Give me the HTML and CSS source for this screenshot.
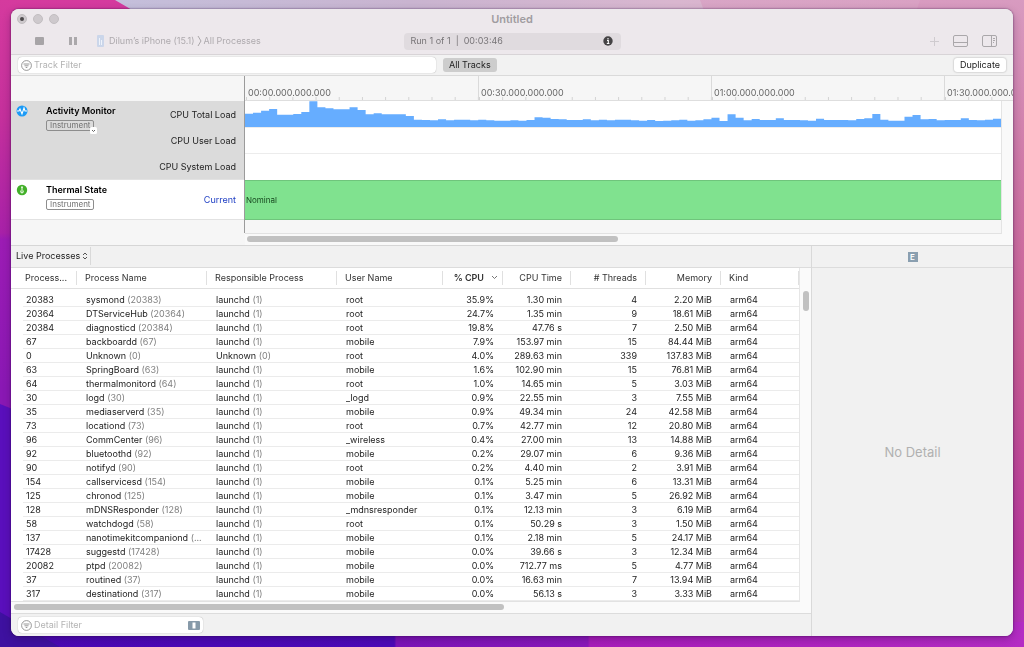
FILE: index.html
```html
<!DOCTYPE html>
<html lang="en">
<head>
<meta charset="utf-8">
<title>Untitled</title>
<meta name="viewport" content="width=device-width, initial-scale=1">
<link rel="stylesheet" href="styles.css">
</head>
<body>
<svg class="wallpaper" viewBox="0 0 1024 647" preserveAspectRatio="none" aria-hidden="true">
  <defs>
    <linearGradient id="wl" x1="0" y1="0" x2="0" y2="1"><stop offset="0" stop-color="#d53a9e"/><stop offset=".18" stop-color="#c5309c"/><stop offset=".36" stop-color="#a821a8"/><stop offset=".37" stop-color="#9c1cb4"/><stop offset=".6" stop-color="#8a18b4"/></linearGradient>
    <linearGradient id="wt" x1="0" y1="0" x2="1" y2="0"><stop offset="0" stop-color="#c2c3df"/><stop offset=".4" stop-color="#c9b4d0"/><stop offset=".66" stop-color="#d9b6cf"/><stop offset="1" stop-color="#dca6c6"/></linearGradient>
    <linearGradient id="wr" x1="0" y1="0" x2="0" y2="1"><stop offset="0" stop-color="#d89bc0"/><stop offset=".25" stop-color="#cf7aa8"/><stop offset=".55" stop-color="#c75c94"/><stop offset=".85" stop-color="#b83a9c"/><stop offset="1" stop-color="#b02fc0"/></linearGradient>
    <linearGradient id="wb" x1="0" y1="0" x2="1" y2="0"><stop offset="0" stop-color="#4a08b4"/><stop offset=".385" stop-color="#4c0ab8"/><stop offset=".387" stop-color="#7c14b8"/><stop offset=".574" stop-color="#8a18ba"/><stop offset=".576" stop-color="#a81cba"/><stop offset="1" stop-color="#b42cc4"/></linearGradient>
  </defs>
  <rect width="1024" height="647" fill="url(#wt)"/>
  <path d="M0 0H115L180 38V647H0z" fill="url(#wl)"/>
  <path d="M700 0H1024V647H940z" fill="url(#wr)" opacity=".6"/>
  <path d="M920 0H1024V647H900V60z" fill="url(#wr)"/>
  <path d="M0 404L20 412V647H0z" fill="#5a0fbc"/>
  <path d="M0 622H1024V647H0z" fill="url(#wb)"/>
  <path d="M0 612L60 647H0z" fill="#3e11a0"/>
</svg>
<main class="window">
  <header class="titlebar">
    <div class="title-row">
      <div class="lights"><button class="light edited" aria-label="Close"></button><button class="light" aria-label="Minimize"></button><button class="light" aria-label="Zoom"></button></div>
      <h1>Untitled</h1>
    </div>
    <div class="toolbar">
      <div class="tools">
        <button class="icon-button" aria-label="Stop"><svg width="10" height="10"><rect x="1" y="1" width="9" height="8" rx="1" fill="#a7a4a7"/></svg></button>
        <button class="icon-button pause" aria-label="Pause"><svg width="8" height="10"><path d="M0 1h3v8H0zM5 1h3v8H5z" fill="#aba8ab"/></svg></button>
        <button class="target">
          <svg width="7" height="12"><rect x="0" y="0" width="7" height="12" rx="1" fill="#cbd6ea"/><path d="M2.500 3v7M4.500 5v5" stroke="#eef3fb"/></svg>
          <span>Dilum’s iPhone (15.1)</span>
          <svg class="crumb" width="5" height="12"><path d="M1 1l3 5-3 5" fill="none" stroke="#aaa7aa"/></svg>
          <span>All Processes</span>
        </button>
      </div>
      <div class="run"><span>Run 1 of 1&nbsp; |&nbsp; 00:03:46</span>
        <button class="icon-button" aria-label="Information"><svg width="10" height="10"><circle cx="5" cy="5" r="4.700" fill="#454345"/><path d="M5 2v1.500M4 4.500h1.300V7.500M3.800 7.500h2.600" stroke="#fff" stroke-width="1.100" fill="none"/></svg></button>
      </div>
      <div class="views">
        <button class="icon-button" aria-label="Add"><svg width="9" height="9"><path d="M0 4.500h9M4.500 0v9" stroke="#cfcbcf"/></svg></button>
        <button class="icon-button" aria-label="Show detail area"><svg width="15" height="12" fill="none" stroke="#aaa7aa"><rect x=".5" y=".5" width="14" height="11" rx="1.500"/><path d="M1 7.500h13"/></svg></button>
        <button class="icon-button" aria-label="Show inspector"><svg width="15" height="12" fill="none" stroke="#aaa7aa"><rect x=".5" y=".5" width="14" height="11" rx="1.500"/><path d="M9.500 1v10M11 3.500h2M11 5.500h2M11 7.500h1"/></svg></button>
      </div>
    </div>
  </header>

  <div class="filter-bar">
    <label class="search">
      <svg width="11" height="11" fill="none" stroke="#7d7d7d"><circle cx="5.500" cy="5.500" r="4.900" stroke-width=".8"/><path d="M2.500 4h6M3.500 5.800h4M4.700 7.500h1.600" stroke-width=".8"/></svg>
      <input type="text" placeholder="Track Filter" aria-label="Track Filter">
    </label>
    <button class="scope">All Tracks</button>
    <button class="duplicate">Duplicate</button>
  </div>

  <section class="timeline">
    <div class="names">
      <div class="ruler-gap"></div>
      <div class="track-name selected">
        <svg class="badge" width="12" height="12"><circle cx="6" cy="6" r="5.500" fill="#1c9bf6"/><path d="M1 6h2l1-2 2 5 2-6 1 3h2" fill="none" stroke="#fff" stroke-width="1.100"/></svg>
        <div class="track-info"><h2>Activity Monitor</h2>
          <button class="tag">Instrument<svg class="drop" width="7" height="7"><rect width="7" height="7" rx="1.500" fill="#fff"/><path d="M2 3l1.500 1.500L5 3" fill="none" stroke="#555" stroke-width=".9"/></svg></button>
        </div>
        <ul class="lanes"><li>CPU Total Load</li><li>CPU User Load</li><li>CPU System Load</li></ul>
      </div>
      <div class="track-name thermal">
        <svg class="badge" width="12" height="12"><circle cx="6" cy="6" r="5.200" fill="#43b02a"/><path d="M5 3.200a1 1 0 0 1 2 0V6a1.800 1.800 0 1 1-2 0z" fill="#d9f3d0"/><path d="M6 4v4" stroke="#43b02a" stroke-width=".8"/></svg>
        <div class="track-info"><h2>Thermal State</h2><button class="tag">Instrument</button></div>
        <ul class="lanes"><li class="current">Current</li></ul>
      </div>
    </div>
    <div class="charts">
      <div class="ruler"><span>00:00.000.000.000</span><span>00:30.000.000.000</span><span>01:00.000.000.000</span><span>01:30.000.000.000</span></div>
      <div class="plots">
        <svg class="load" viewBox="0 0 94 78" preserveAspectRatio="none" role="img" aria-label="CPU Total Load">
          <path d="M0 78V38h1V35h1V29h1V24h1V41h1V41h1V39h1V33h1V1h1V19h1V22h1V25h1V25h1V19h1V27h1V40h1V37h1V40h1V40h1V40h1V45h1V56h1V57h1V58h1V55h1V58h1V56h1V56h1V58h1V56h1V58h1V59h1V59h1V58h1V59h1V57h1V49h1V50h1V54h1V55h1V57h1V57h1V55h1V58h1V56h1V58h1V56h1V56h1V58h1V59h1V57h1V60h1V59h1V58h1V56h1V59h1V58h1V55h1V50h1V60h1V40h1V50h1V58h1V54h1V57h1V57h1V52h1V57h1V57h1V58h1V59h1V53h1V57h1V57h1V57h1V58h1V54h1V52h1V39h1V56h1V59h1V59h1V47h1V42h1V55h1V54h1V58h1V57h1V57h1V52h1V57h1V58h1V56h1V53H94V78z"/>
        </svg>
        <div class="lane"></div>
        <div class="lane"></div>
        <div class="state">Nominal</div>
        <div class="rest"></div>
      </div>
      <div class="hscroll"><div class="thumb"></div></div>
    </div>
  </section>

  <div class="bottom">
    <section class="detail">
      <div class="detail-bar">
        <label class="picker"><select aria-label="Detail view"><option>Live Processes</option></select>
          <svg width="6" height="8" fill="none" stroke="#555"><path d="M1 3l2-2 2 2M1 5l2 2 2-2"/></svg></label>
      </div>
      <div class="table-area">
        <table>
          <colgroup><col class="c-id"><col class="c-name"><col class="c-name"><col class="c-user"><col class="c-cpu"><col class="c-time"><col class="c-num"><col class="c-num"><col></colgroup>
          <thead><tr><th>Process...</th><th>Process Name</th><th>Responsible Process</th><th>User Name</th><th class="n sorted">% CPU<svg width="7" height="5"><path d="M1 1l2.500 2.500L6 1" fill="none" stroke="#666" stroke-width=".9"/></svg></th><th class="n">CPU Time</th><th class="n"># Threads</th><th class="n">Memory</th><th>Kind</th></tr></thead>
          <tbody>
            <tr><td>20383</td><td>sysmond <i>(20383)</i></td><td>launchd <i>(1)</i></td><td>root</td><td>35.9%</td><td>1.30 min</td><td>4</td><td>2.20 MiB</td><td>arm64</td></tr>
            <tr><td>20364</td><td>DTServiceHub <i>(20364)</i></td><td>launchd <i>(1)</i></td><td>root</td><td>24.7%</td><td>1.35 min</td><td>9</td><td>18.61 MiB</td><td>arm64</td></tr>
            <tr><td>20384</td><td>diagnosticd <i>(20384)</i></td><td>launchd <i>(1)</i></td><td>root</td><td>19.8%</td><td>47.76 s</td><td>7</td><td>2.50 MiB</td><td>arm64</td></tr>
            <tr><td>67</td><td>backboardd <i>(67)</i></td><td>launchd <i>(1)</i></td><td>mobile</td><td>7.9%</td><td>153.97 min</td><td>15</td><td>84.44 MiB</td><td>arm64</td></tr>
            <tr><td>0</td><td>Unknown <i>(0)</i></td><td>Unknown <i>(0)</i></td><td>root</td><td>4.0%</td><td>289.63 min</td><td>339</td><td>137.83 MiB</td><td>arm64</td></tr>
            <tr><td>63</td><td>SpringBoard <i>(63)</i></td><td>launchd <i>(1)</i></td><td>mobile</td><td>1.6%</td><td>102.90 min</td><td>15</td><td>76.81 MiB</td><td>arm64</td></tr>
            <tr><td>64</td><td>thermalmonitord <i>(64)</i></td><td>launchd <i>(1)</i></td><td>root</td><td>1.0%</td><td>14.65 min</td><td>5</td><td>3.03 MiB</td><td>arm64</td></tr>
            <tr><td>30</td><td>logd <i>(30)</i></td><td>launchd <i>(1)</i></td><td>_logd</td><td>0.9%</td><td>22.55 min</td><td>3</td><td>7.55 MiB</td><td>arm64</td></tr>
            <tr><td>35</td><td>mediaserverd <i>(35)</i></td><td>launchd <i>(1)</i></td><td>mobile</td><td>0.9%</td><td>49.34 min</td><td>24</td><td>42.58 MiB</td><td>arm64</td></tr>
            <tr><td>73</td><td>locationd <i>(73)</i></td><td>launchd <i>(1)</i></td><td>root</td><td>0.7%</td><td>42.77 min</td><td>12</td><td>20.80 MiB</td><td>arm64</td></tr>
            <tr><td>96</td><td>CommCenter <i>(96)</i></td><td>launchd <i>(1)</i></td><td>_wireless</td><td>0.4%</td><td>27.00 min</td><td>13</td><td>14.88 MiB</td><td>arm64</td></tr>
            <tr><td>92</td><td>bluetoothd <i>(92)</i></td><td>launchd <i>(1)</i></td><td>mobile</td><td>0.2%</td><td>29.07 min</td><td>6</td><td>9.36 MiB</td><td>arm64</td></tr>
            <tr><td>90</td><td>notifyd <i>(90)</i></td><td>launchd <i>(1)</i></td><td>root</td><td>0.2%</td><td>4.40 min</td><td>2</td><td>3.91 MiB</td><td>arm64</td></tr>
            <tr><td>154</td><td>callservicesd <i>(154)</i></td><td>launchd <i>(1)</i></td><td>mobile</td><td>0.1%</td><td>5.25 min</td><td>6</td><td>13.31 MiB</td><td>arm64</td></tr>
            <tr><td>125</td><td>chronod <i>(125)</i></td><td>launchd <i>(1)</i></td><td>mobile</td><td>0.1%</td><td>3.47 min</td><td>5</td><td>26.92 MiB</td><td>arm64</td></tr>
            <tr><td>128</td><td>mDNSResponder <i>(128)</i></td><td>launchd <i>(1)</i></td><td>_mdnsresponder</td><td>0.1%</td><td>12.13 min</td><td>3</td><td>6.19 MiB</td><td>arm64</td></tr>
            <tr><td>58</td><td>watchdogd <i>(58)</i></td><td>launchd <i>(1)</i></td><td>root</td><td>0.1%</td><td>50.29 s</td><td>3</td><td>1.50 MiB</td><td>arm64</td></tr>
            <tr><td>137</td><td>nanotimekitcompaniond <i>(...</i></td><td>launchd <i>(1)</i></td><td>mobile</td><td>0.1%</td><td>2.18 min</td><td>5</td><td>24.17 MiB</td><td>arm64</td></tr>
            <tr><td>17428</td><td>suggestd <i>(17428)</i></td><td>launchd <i>(1)</i></td><td>mobile</td><td>0.0%</td><td>39.66 s</td><td>3</td><td>12.34 MiB</td><td>arm64</td></tr>
            <tr><td>20082</td><td>ptpd <i>(20082)</i></td><td>launchd <i>(1)</i></td><td>mobile</td><td>0.0%</td><td>712.77 ms</td><td>5</td><td>4.77 MiB</td><td>arm64</td></tr>
            <tr><td>37</td><td>routined <i>(37)</i></td><td>launchd <i>(1)</i></td><td>mobile</td><td>0.0%</td><td>16.63 min</td><td>7</td><td>13.94 MiB</td><td>arm64</td></tr>
            <tr><td>317</td><td>destinationd <i>(317)</i></td><td>launchd <i>(1)</i></td><td>mobile</td><td>0.0%</td><td>56.13 s</td><td>3</td><td>3.33 MiB</td><td>arm64</td></tr>
          </tbody>
        </table>
        <div class="vscroll"><div class="thumb"></div></div>
      </div>
      <div class="hscroll table-scroll"><div class="thumb"></div></div>
      <div class="detail-footer">
        <label class="search">
          <svg width="11" height="11" fill="none" stroke="#7d7d7d"><circle cx="5.500" cy="5.500" r="4.900" stroke-width=".8"/><path d="M2.500 4h6M3.500 5.800h4M4.700 7.500h1.600" stroke-width=".8"/></svg>
          <input type="text" placeholder="Detail Filter" aria-label="Detail Filter">
          <svg width="12" height="9"><rect width="12" height="9" rx="1" fill="#879aa9"/><path d="M4.500 1.500h3v6h-3z" fill="#fff"/></svg>
        </label>
      </div>
    </section>
    <aside class="inspector">
      <div class="inspector-bar"><button class="extended" aria-label="Extended detail">E</button></div>
      <p>No Detail</p>
    </aside>
  </div>
</main>
</body>
</html>
```
FILE: styles.css
```css
* { box-sizing: border-box; }

body {
  margin: 0;
  min-height: 100vh;
  padding: 9px 11px 11px;
  display: flex;
  background: #b02fc0;
  color: #222;
  font: 9px/14px Inter, "Liberation Sans", sans-serif;
}

button, input, select {
  margin: 0;
  padding: 0;
  border: 0;
  background: none;
  color: inherit;
  font: inherit;
}

h1, h2, p, ul { margin: 0; padding: 0; list-style: none; }
svg { display: block; flex: none; }

.wallpaper { position: fixed; inset: 0; width: 100%; height: 100%; z-index: -1; }

.window {
  flex: 1;
  min-width: 0;
  display: flex;
  flex-direction: column;
  overflow: hidden;
  border-radius: 8px;
  background: #f1f1f1;
  box-shadow: 0 0 2px rgba(40, 0, 60, .7), 0 3px 8px rgba(40, 0, 60, .3);
}

/* Title bar */
.titlebar { background: #ede8ec; border-bottom: 1px solid #d8d4d7; }
.title-row { display: grid; grid-template-columns: 1fr auto 1fr; align-items: center; height: 20px; padding: 0 6px; }
.lights { display: flex; gap: 6px; }
.light { display: grid; place-items: center; width: 10px; height: 10px; border: 1px solid #c2bdc1; border-radius: 50%; background: #cec9cd; }
.edited::after { content: ""; width: 4px; height: 4px; border-radius: 50%; background: #4c484b; }
h1 { font-size: 11px; font-weight: 600; color: #a09ca0; }
.toolbar { display: grid; grid-template-columns: 1fr 217px 1fr; align-items: center; height: 25px; padding-bottom: 1px; color: #aeaaae; }
.tools { display: flex; align-items: center; padding-left: 23px; }
.icon-button { display: flex; }
.pause { margin-left: 25px; }
.target { display: flex; align-items: center; margin-left: 20px; }
.target span:first-of-type { margin-left: 5px; }
.crumb { margin: 0 2px; }
.run { display: flex; justify-content: space-between; align-items: center; height: 17px; padding: 0 8px 0 7px; border-radius: 4px; background: #e0dbdf; color: #777477; }
.views { display: flex; justify-content: flex-end; align-items: center; gap: 14px; padding-right: 16px; }

/* Filters */
.filter-bar { display: flex; align-items: center; height: 21px; padding: 0 7px; background: #f2f2f2; border-bottom: 1px solid #dadada; }
.search { display: flex; align-items: center; gap: 2px; width: 418px; height: 16px; padding: 0 3px; border-radius: 4px; background: #fff; box-shadow: 0 0 1px rgba(0, 0, 0, .4); }
.search input { flex: 1; min-width: 0; outline: 0; }
.search input::placeholder { color: #b3b3b3; opacity: 1; }
.scope { margin-left: 7px; padding: 0 6px; border-radius: 3px; background: #cdcdcd; }
.duplicate { margin-left: auto; padding: 0 6px; border-radius: 3px; background: #fff; box-shadow: 0 0 2px rgba(0, 0, 0, .35); }

/* Timeline */
.timeline { display: grid; grid-template-columns: 234px minmax(0, 1fr); background: #f9f9f9; border-bottom: 1px solid #d6d6d6; }
.names { position: relative; background: #f6f6f6; }
.names::after { content: ""; position: absolute; top: 0; right: 0; bottom: 12px; width: 1px; background: #9b9b9b; }
.ruler-gap { height: 25px; }
.track-name { display: grid; grid-template-columns: 24px auto 1fr; padding: 0 9px 0 5px; border-bottom: 1px solid #e2e2e2; }
.badge { margin-top: 4px; }
.track-info { padding: 3px 0 0 6px; }
h2 { font-size: 9px; line-height: 14px; font-weight: 600; color: #000; }
.tag { position: relative; display: block; height: 11px; margin-top: 2px; padding: 0 3px; border: 1px solid #8d8d8d; border-radius: 2px; font-size: 8px; line-height: 9px; color: #707070; }
.drop { position: absolute; right: -4px; bottom: -4px; }
.lanes { text-align: right; }
.lanes li { height: 26px; line-height: 27px; }
.selected { height: 79px; background: #dbdbdb; }
.thermal { height: 40px; background: #fff; }
.lanes .current { height: 39px; line-height: 39px; color: #1f3fc4; }
.ruler { display: flex; height: 25px; overflow: hidden; background: #f6f6f6; border-bottom: 1px solid #dedede; }
.ruler span { flex: none; width: 233px; padding: 10px 0 0 2px; border-left: 1px solid #dadada; color: #666; background: linear-gradient(to right, #d2d2d2 1px, transparent 1px) 0 100% / 10% 3px repeat-x; }
.ruler span:first-child { border-color: transparent; }
.plots { margin-right: 11px; border-right: 1px solid #e4e4e4; background: #fff; }
.load { width: 100%; height: 26px; fill: #66adff; }
.lane { height: 26px; border-top: 1px solid #ececec; }
.state { height: 40px; margin-top: 1px; padding-left: 1px; font-size: 8px; line-height: 38px; background: #80e28f; border: solid #6fc57c; border-width: 1px 0; color: #184a20; }
.rest { height: 14px; background: #f6f6f6; border-bottom: 1px solid #e2e2e2; }
.hscroll { height: 11px; padding: 2px; }
.hscroll .thumb { width: 371px; height: 6px; border-radius: 3px; background: #c1c1c1; }

/* Detail table */
.bottom { flex: 1; display: grid; grid-template-columns: minmax(0, 1fr) 202px; }
.detail { display: flex; flex-direction: column; background: #fafafa; }
.detail-bar { height: 22px; padding: 1px 0 2px 5px; display: flex; background: #f1f1f1; border-bottom: 1px solid #dcdcdc; }
.picker { display: flex; align-items: center; gap: 1px; padding-right: 2px; border-right: 1px solid #d9d9d9; }
.picker select { appearance: none; }
.table-area { display: grid; grid-template-columns: minmax(0, 1fr) 11px; }
table { width: 100%; border-collapse: separate; border-spacing: 0; table-layout: fixed; background: #fff; border-right: 1px solid #e6e6e6; border-bottom: 1px solid #e2e2e2; }
.c-id { width: 66px; }
.c-name { width: 130px; }
.c-user { width: 106px; }
.c-cpu { width: 60px; }
.c-time { width: 68px; }
.c-num { width: 75px; }
th, td { padding: 0 8px; text-align: left; white-space: nowrap; overflow: hidden; }
th { height: 21px; font-weight: 400; color: #333; border-bottom: 1px solid #e0e0e0; background: linear-gradient(#e0e0e0, #e0e0e0) 100% 50% / 1px 14px no-repeat; }
td { height: 14px; border-bottom: 1px solid #ebebeb; line-height: 13px; padding-left: 9px; }
th:first-child { padding-left: 14px; padding-right: 4px; }
td:first-child { padding-left: 15px; }
td:first-child { border-image: linear-gradient(to right, transparent 13px, #ebebeb 13px) 1; border-width: 0 0 1px; }
thead::after { content: ""; display: block; height: 4px; }
.n, td:nth-child(n+5):nth-child(-n+8) { text-align: right; padding-right: 9px; }
.n { padding-left: 0; }
.sorted { font-weight: 600; padding-right: 5px; }
.sorted svg { display: inline-block; margin-left: 7px; vertical-align: 1px; }
td i { font-style: normal; color: #7f7f7f; }
.vscroll { padding: 23px 2px 0 3px; }
.vscroll .thumb { height: 20px; border-radius: 3px; background: #c1c1c1; }
.table-scroll { padding-left: 3px; }
.table-scroll .thumb { width: 490px; }
.detail-footer { flex: 1; display: flex; align-items: center; padding: 0 7px; background: #f1f1f1; border-top: 1px solid #dcdcdc; }
.detail-footer .search { width: 185px; }

/* Inspector */
.inspector { display: flex; flex-direction: column; border-left: 1px solid #d9d9d9; background: #f1f1f1; }
.inspector-bar { display: grid; place-items: center; height: 22px; border-bottom: 1px solid #dcdcdc; }
.extended { width: 10px; height: 10px; background: #8a9fb0; color: #fff; font-size: 8px; font-weight: 600; line-height: 10px; }
.inspector p { flex: 1; display: grid; place-items: center; font-size: 13px; color: #b0b0b0; }
```
